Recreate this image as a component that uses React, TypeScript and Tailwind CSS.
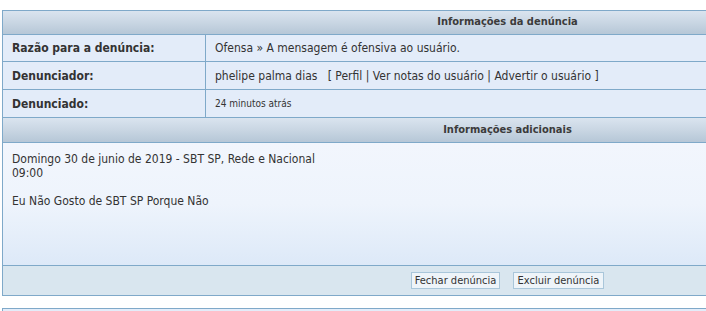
const font = { fontFamily: '"DejaVu Sans Condensed", "DejaVu Sans", Verdana, sans-serif' }

const rows = [
  { label: 'Razão para a denúncia:', value: <span>Ofensa » A mensagem é ofensiva ao usuário.</span>, h: 'h-[27px]' },
  {
    label: 'Denunciador:',
    value: (
      <span>
        phelipe palma dias&nbsp;&nbsp;&nbsp;[ Perfil | Ver notas do usuário | Advertir o usuário ]
      </span>
    ),
    h: 'h-[28px]',
  },
  { label: 'Denunciado:', value: <span className="text-[10px]">24 minutos atrás</span>, h: 'h-[28px]' },
]

function SectionHeader({ title, h }: { title: string; h: string }) {
  return (
    <div className={`${h} flex items-center justify-center border-b border-[#7fa9c9] bg-gradient-to-b from-[#dae4ef] via-[#c9d6e3] to-[#b6c7d7] text-[11px] font-bold text-[#3b3b3b]`}>
      {title}
    </div>
  )
}

export default function App() {
  return (
    <div className="h-[311px] w-full overflow-hidden bg-white pl-[2px] pt-[10px] text-[#333]" style={font}>
      <div className="w-[1010px] border-l border-t border-[#7fa9c9]">
        <SectionHeader title="Informações da denúncia" h="h-[24px]" />
        {rows.map((r) => (
          <div key={r.label} className={`grid grid-cols-[203px_1fr] border-b border-[#7fa9c9] bg-[#e3ecf9] ${r.h}`}>
            <div className="flex items-center border-r border-[#7fa9c9] pl-[9px] text-[12px] font-bold">{r.label}</div>
            <div className="flex items-center pl-[9px] text-[12px]">{r.value}</div>
          </div>
        ))}
        <SectionHeader title="Informações adicionais" h="h-[25px]" />
        <div className="h-[123px] border-b border-[#7fa9c9] bg-gradient-to-b from-[#f2f6fd] via-[#eef4fc] to-[#dde9f8] px-[9px] pt-[9px] text-[12px] leading-[14px]">
          <p>Domingo 30 de junio de 2019 - SBT SP, Rede e Nacional</p>
          <p>09:00</p>
          <p className="mt-[14px]">Eu Não Gosto de SBT SP Porque Não</p>
        </div>
        <div className="flex h-[30px] items-center justify-center gap-[13px] border-b border-[#7fa9c9] bg-[#d9e6ef]">
          <button className="h-[17px] w-[89px] border border-[#a9c6da] bg-[#eef4f9] text-[11px] leading-[15px] text-[#333]">
            Fechar denúncia
          </button>
          <button className="h-[17px] w-[91px] border border-[#a9c6da] bg-[#eef4f9] text-[11px] leading-[15px] text-[#333]">
            Excluir denúncia
          </button>
        </div>
      </div>
      <div className="mt-[12px] h-[20px] w-[1010px] border-l border-t border-[#7fa9c9] bg-[#e3ecf9]" />
    </div>
  )
}
